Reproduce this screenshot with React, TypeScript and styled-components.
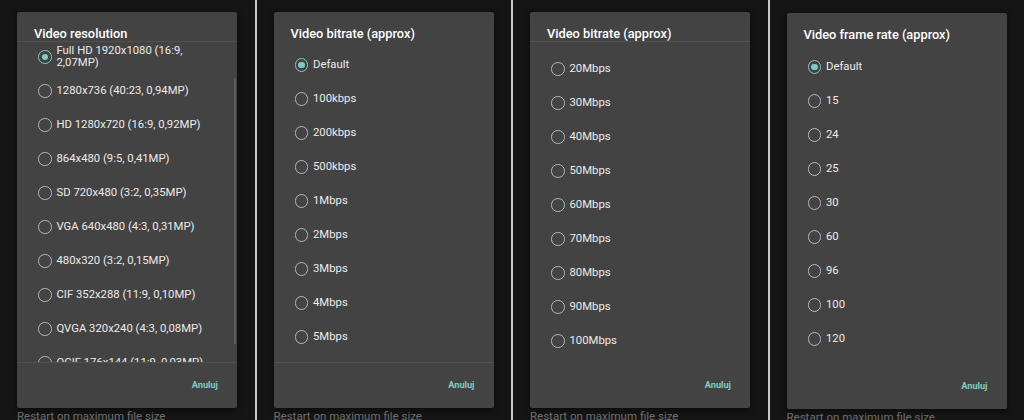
import React from 'react';
import styled, { createGlobalStyle } from 'styled-components';

const GlobalStyle = createGlobalStyle`
    html, body {
        margin: 0;
        padding: 0;
        background: #151515;
    }
    body {
        font-family: Roboto, "Noto Sans", "Liberation Sans", sans-serif;
        -webkit-font-smoothing: antialiased;
    }
`;

const Screens = styled.div`
    display: flex;
    width: 1024px;
    height: 420px;
    overflow: hidden;
`;

const Screen = styled.div<{ $top: number }>`
    flex: 1;
    min-width: 0;
    display: flex;
    flex-direction: column;
    padding: ${(props) => props.$top}px 17px 0 17px;
    background: #151515;
    overflow: hidden;

    & + & {
        border-left: 2px solid #c9c9c9;
    }
`;

const Dialog = styled.div`
    width: 220px;
    height: 396px;
    flex: none;
    display: flex;
    flex-direction: column;
    background: #434343;
    border-radius: 2px;
    box-shadow: 0 2px 6px rgba(0, 0, 0, 0.5);
`;

const Title = styled.div`
    height: 29px;
    box-sizing: border-box;
    padding: 14px 17px 0;
    font-size: 12.8px;
    line-height: 16px;
    font-weight: 500;
    color: #ffffff;
    white-space: nowrap;
`;

const List = styled.div<{ $topLine: boolean; $bottomLine: boolean }>`
    position: relative;
    height: 320px;
    flex: none;
    overflow: hidden;
    border-top: 1px solid ${(props) => (props.$topLine ? '#505050' : 'transparent')};
    border-bottom: 1px solid ${(props) => (props.$bottomLine ? '#505050' : 'transparent')};
`;

const ListInner = styled.div<{ $offset: number }>`
    margin-top: ${(props) => props.$offset}px;
`;

const Row = styled.div`
    display: flex;
    align-items: center;
    gap: 5px;
    min-height: 34px;
    padding: 0 18px 0 21px;
    box-sizing: border-box;
`;

const Radio = styled.span<{ $checked: boolean }>`
    flex: none;
    width: 13.5px;
    height: 13.5px;
    box-sizing: border-box;
    border-radius: 50%;
    border: 1.8px solid ${(props) => (props.$checked ? '#80cbc4' : '#b8b8b8')};
    display: flex;
    align-items: center;
    justify-content: center;

    &::after {
        content: '';
        width: 6.5px;
        height: 6.5px;
        border-radius: 50%;
        background: #80cbc4;
        display: ${(props) => (props.$checked ? 'block' : 'none')};
    }
`;

const Label = styled.span`
    font-size: 11.3px;
    line-height: 12.5px;
    color: #ececec;
`;

const Scrollbar = styled.div`
    position: absolute;
    right: 1px;
    top: 36px;
    width: 2px;
    height: 266px;
    background: #5a5a5a;
`;

const Buttons = styled.div`
    flex: 1;
    display: flex;
    align-items: center;
    justify-content: flex-end;
    padding: 0 19px 2px 0;
`;

const TextButton = styled.button`
    border: none;
    background: none;
    padding: 0;
    font-family: inherit;
    font-size: 9.2px;
    font-weight: 700;
    color: #80cbc4;
`;

const Hint = styled.div`
    padding-top: 1px;
    font-size: 11.5px;
    line-height: 14px;
    color: #6e6e6e;
    white-space: nowrap;
`;

type Picker = {
    title: string;
    items: string[];
    selected: number;
    offset: number;
    top: number;
    topLine: boolean;
    bottomLine: boolean;
    scrollbar: boolean;
};

const pickers: Picker[] = [
    {
        title: 'Video resolution',
        items: [
            'Full HD 1920x1080 (16:9, 2,07MP)',
            '1280x736 (40:23, 0,94MP)',
            'HD 1280x720 (16:9, 0,92MP)',
            '864x480 (9:5, 0,41MP)',
            'SD 720x480 (3:2, 0,35MP)',
            'VGA 640x480 (4:3, 0,31MP)',
            '480x320 (3:2, 0,15MP)',
            'CIF 352x288 (11:9, 0,10MP)',
            'QVGA 320x240 (4:3, 0,08MP)',
            'QCIF 176x144 (11:9, 0,03MP)',
        ],
        selected: 0,
        offset: -2,
        top: 12,
        topLine: true,
        bottomLine: true,
        scrollbar: true,
    },
    {
        title: 'Video bitrate (approx)',
        items: ['Default', '100kbps', '200kbps', '500kbps', '1Mbps', '2Mbps', '3Mbps', '4Mbps', '5Mbps', '10Mbps'],
        selected: 0,
        offset: 6,
        top: 12,
        topLine: false,
        bottomLine: true,
        scrollbar: false,
    },
    {
        title: 'Video bitrate (approx)',
        items: ['20Mbps', '30Mbps', '40Mbps', '50Mbps', '60Mbps', '70Mbps', '80Mbps', '90Mbps', '100Mbps'],
        selected: -1,
        offset: 10,
        top: 12,
        topLine: true,
        bottomLine: false,
        scrollbar: false,
    },
    {
        title: 'Video frame rate (approx)',
        items: ['Default', '15', '24', '25', '30', '60', '96', '100', '120'],
        selected: 0,
        offset: 7,
        top: 13,
        topLine: false,
        bottomLine: false,
        scrollbar: false,
    },
];

const App: React.FC = () => {
    return (
        <>
            <GlobalStyle />
            <Screens>
                {pickers.map((picker, i) => (
                    <Screen key={i} $top={picker.top}>
                        <Dialog>
                            <Title>{picker.title}</Title>
                            <List $topLine={picker.topLine} $bottomLine={picker.bottomLine}>
                                <ListInner $offset={picker.offset}>
                                    {picker.items.map((item, j) => (
                                        <Row key={item}>
                                            <Radio $checked={j === picker.selected} />
                                            <Label>{item}</Label>
                                        </Row>
                                    ))}
                                </ListInner>
                                {picker.scrollbar && <Scrollbar />}
                            </List>
                            <Buttons>
                                <TextButton>Anuluj</TextButton>
                            </Buttons>
                        </Dialog>
                        <Hint>Restart on maximum file size</Hint>
                    </Screen>
                ))}
            </Screens>
        </>
    );
};

export default App;
